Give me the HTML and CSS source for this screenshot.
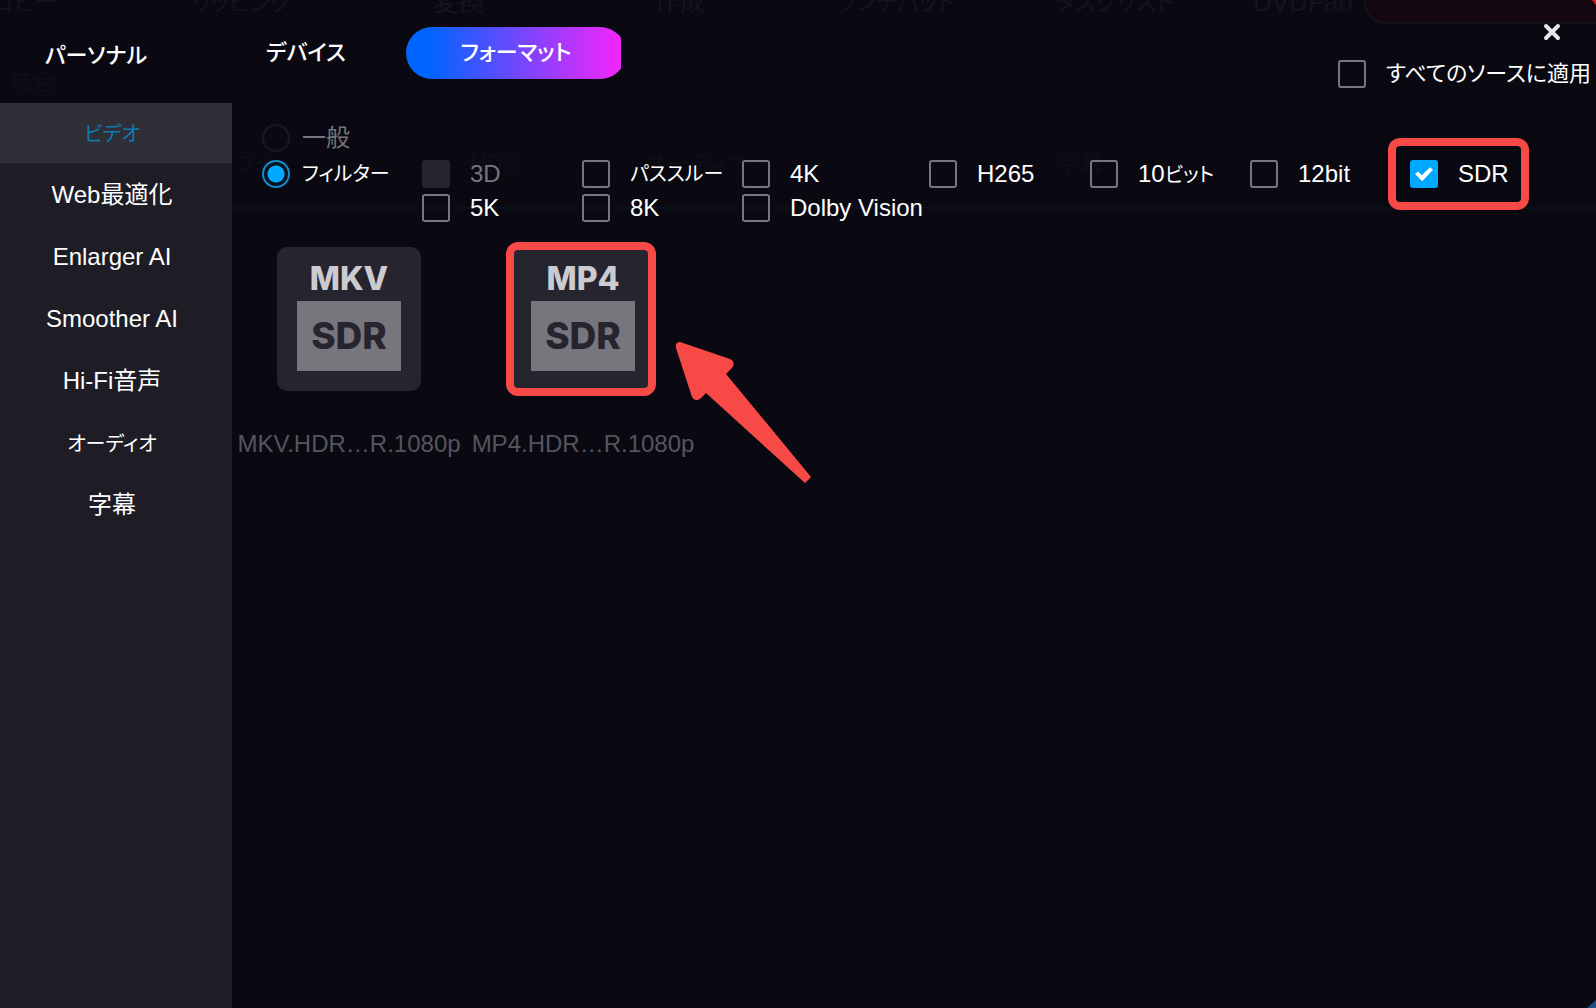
FILE: index.html
```html
<!DOCTYPE html>
<html lang="ja">
<head>
<meta charset="utf-8">
<meta name="viewport" content="width=device-width, initial-scale=1">
<title>フォーマット</title>
<link rel="stylesheet" href="styles.css">
</head>
<body>
<div class="app">
  <!-- Dimmed window behind the dialog -->
  <div class="backdrop" aria-hidden="true">
    <span class="ghost kana-ghost ghost-copy">コピー</span>
    <span class="ghost kana-ghost ghost-rip">リッピング</span>
    <span class="ghost ghost-convert">変換</span>
    <span class="ghost ghost-create">作成</span>
    <span class="ghost kana-ghost ghost-launch">ランチパッド</span>
    <span class="ghost kana-ghost ghost-tasks">タスクリスト</span>
    <span class="ghost ghost-fab">DVDFab</span>
    <span class="ghost-pill"></span>
    <span class="ghost small ghost-merge">結合</span>
    <span class="ghost small ghost-up">プク</span>
    <span class="ghost small ghost-hdr">HDR</span>
    <span class="ghost small ghost-audio">オーディオ</span>
    <span class="ghost small ghost-sub">字幕</span>
    <span class="ghost-line"></span>
    <span class="corner corner-top"></span>
    <span class="corner corner-bottom"></span>
  </div>

  <header class="header">
    <button class="tab tab-personal" type="button">パーソナル</button>
    <nav class="tabs">
      <button class="tab tab-device" type="button">デバイス</button>
      <button class="tab tab-format" type="button">フォーマット</button>
    </nav>
    <div class="actions">
      <button class="close" type="button" aria-label="閉じる">
        <svg width="18" height="18" viewBox="0 0 18 18"><path d="M3 3l12 12M15 3L3 15" stroke="#e6e6ea" stroke-width="4" stroke-linecap="round"/></svg>
      </button>
      <label class="option apply"><input class="check" type="checkbox">すべてのソースに適用</label>
    </div>
  </header>

  <nav class="sidebar">
    <a class="side-item active" href="#video"><span class="kana">ビデオ</span></a>
    <a class="side-item" href="#web">Web最適化</a>
    <a class="side-item" href="#enlarger">Enlarger AI</a>
    <a class="side-item" href="#smoother">Smoother AI</a>
    <a class="side-item" href="#hifi">Hi-Fi音声</a>
    <a class="side-item" href="#audio"><span class="kana">オーディオ</span></a>
    <a class="side-item" href="#subtitle">字幕</a>
  </nav>

  <main class="content">
    <div class="filters">
      <div class="modes">
        <label class="mode muted"><input class="radio" type="radio" name="mode" disabled>一般</label>
        <label class="mode"><input class="radio" type="radio" name="mode" checked><span class="kana">フィルター</span></label>
      </div>
      <div class="options">
        <label class="option muted"><input class="check" type="checkbox" disabled>3D</label>
        <label class="option"><input class="check" type="checkbox"><span class="kana">パススルー</span></label>
        <label class="option"><input class="check" type="checkbox">4K</label>
        <label class="option"><input class="check" type="checkbox">H265</label>
        <label class="option"><input class="check" type="checkbox"><span>10<span class="kana">ビット</span></span></label>
        <label class="option"><input class="check" type="checkbox">12bit</label>
        <label class="option marked"><input class="check" type="checkbox" checked>SDR</label>
        <label class="option"><input class="check" type="checkbox">5K</label>
        <label class="option"><input class="check" type="checkbox">8K</label>
        <label class="option"><input class="check" type="checkbox">Dolby Vision</label>
      </div>
    </div>

    <div class="formats">
      <figure class="format">
        <div class="tile"><span class="tile-name">MKV</span><span class="tile-range">SDR</span></div>
        <figcaption>MKV.HDR…R.1080p</figcaption>
      </figure>
      <figure class="format picked">
        <div class="tile"><span class="tile-name">MP4</span><span class="tile-range">SDR</span></div>
        <figcaption>MP4.HDR…R.1080p</figcaption>
        <svg class="arrow" width="140" height="146" viewBox="0 0 140 146" aria-hidden="true">
          <path d="M5 2 Q0 2 1 8 L17 57 Q20 63 26 58 L31 53 L130 143 L136 137 L51 34 L57 28 Q61 22 55 19 Z" fill="#f74a46"/>
        </svg>
      </figure>
    </div>
  </main>
</div>
</body>
</html>
```
FILE: styles.css
```css
*,
*::before,
*::after { box-sizing: border-box; }

body {
  margin: 0;
  background: #0a0912;
  color: #fff;
  font: 24px/28px "Liberation Sans", "Noto Sans CJK JP", sans-serif;
  font-feature-settings: "palt";
}

button {
  padding: 0;
  border: 0;
  background: none;
  color: inherit;
  font: inherit;
  font-feature-settings: inherit;
  cursor: pointer;
}

.kana {
  font-size: 20px;
  line-height: 24px;
}

.app {
  position: relative;
  display: grid;
  grid-template: 103px 1fr / 232px 1fr;
  min-height: 100vh;
  overflow: hidden;
  white-space: nowrap;
}

/* Header */
.header {
  position: relative;
  grid-column: 1 / -1;
  display: grid;
  grid-template-columns: 232px 1fr auto;
}
.tab {
  font-size: 22px;
  font-weight: 500;
}
.tab-personal { padding: 8px 40px 0 0; }
.tabs {
  display: flex;
  align-items: center;
  gap: 60px;
  padding: 3px 0 0 34px;
}
.tab-format {
  width: 220px;
  height: 52px;
  border-radius: 26px;
  background: linear-gradient(90deg, #0064ff 10%, #ec28fa 95%);
  clip-path: inset(0 5px 0 0);
}
.actions {
  display: flex;
  flex-direction: column;
  align-items: flex-end;
  gap: 19px;
  padding: 23px 5px 0 0;
}
.close {
  height: 18px;
  margin-right: 30px;
}
.close svg { display: block; }
.apply { font-size: 22px; }

/* Sidebar */
.sidebar {
  position: relative;
  display: flex;
  flex-direction: column;
  gap: 2px;
  background: #1e1d26;
}
.side-item {
  height: 60px;
  padding: 16px 8px 0 0;
  color: #fff;
  text-align: center;
  text-decoration: none;
}
.side-item.active {
  background: #302f37;
  color: #0c7db3;
}

/* Filters */
.content { position: relative; }
.filters {
  display: flex;
  align-items: flex-end;
  padding: 21px 0 0 30px;
}
.modes {
  display: flex;
  flex-direction: column;
  gap: 8px;
  width: 160px;
  padding-bottom: 34px;
}
.mode {
  display: flex;
  align-items: center;
  gap: 12px;
}
.options {
  display: grid;
  grid-template-columns: 160px 160px 187px 161px 160px 160px auto;
  row-gap: 6px;
}
.option {
  position: relative;
  display: flex;
  align-items: center;
  gap: 20px;
}
.muted { color: #77767c; }

.check,
.radio {
  flex: none;
  appearance: none;
  width: 28px;
  height: 28px;
  margin: 0;
  border: 2px solid #77767f;
  border-radius: 3px;
}
.check:disabled {
  border-color: #26252f;
  background: #26252f;
}
.check:checked {
  display: grid;
  place-items: center;
  border-color: #00a8ff;
  background: #00a8ff;
}
.check:checked::before {
  content: "";
  width: 18px;
  height: 16px;
  background: #fff;
  clip-path: polygon(0 50%, 17% 34%, 38% 58%, 83% 8%, 100% 24%, 40% 96%);
}
.radio {
  border-color: #191922;
  border-radius: 50%;
}
.radio:checked {
  border-color: #118bca;
  background: radial-gradient(circle, #00a8ff 8px, #04121f 9px);
}

.marked::after,
.picked::after {
  content: "";
  position: absolute;
  border: 8px solid #f74a46;
  border-radius: 12px;
}
.marked::after { inset: -22px -20px -22px -22px; }

/* Formats */
.formats {
  display: flex;
  padding-top: 25px;
}
.format {
  position: relative;
  display: flex;
  flex-direction: column;
  align-items: center;
  gap: 39px;
  width: 234px;
  margin: 0;
  color: #56555d;
}
.tile {
  display: flex;
  flex-direction: column;
  align-items: center;
  width: 144px;
  height: 144px;
  padding-top: 14px;
  border-radius: 10px;
  background: #26252f;
  font-family: Inter, sans-serif;
  font-weight: 800;
}
.tile-name {
  height: 40px;
  color: #cccbd0;
  font-size: 32px;
  line-height: 36px;
}
.tile-range {
  width: 104px;
  background: #77767d;
  color: #26252f;
  font-size: 37px;
  line-height: 70px;
  text-align: center;
}
.picked::after {
  top: -5px;
  left: 40px;
  width: 150px;
  height: 154px;
}
.arrow {
  position: absolute;
  top: 93px;
  left: 209px;
}

/* Backdrop */
.backdrop {
  position: absolute;
  inset: 0;
}
.backdrop span { position: absolute; }
.ghost {
  top: -12px;
  color: #14141e;
  font-size: 26px;
}
.kana-ghost { font-size: 23px; }
.small {
  top: 150px;
  color: #0e0e17;
  font-size: 23px;
}
.ghost-copy { left: -8px; }
.ghost-rip { left: 192px; }
.ghost-convert { left: 432px; }
.ghost-create { left: 654px; }
.ghost-launch { left: 836px; }
.ghost-tasks { left: 1055px; }
.ghost-fab { left: 1253px; }
.ghost-merge { top: 68px; left: 10px; }
.ghost-up { left: 234px; }
.ghost-hdr { left: 470px; }
.ghost-audio { left: 646px; }
.ghost-sub { left: 1057px; }
.ghost-pill {
  top: -20px;
  right: -20px;
  width: 252px;
  height: 44px;
  border: 2px solid #14121c;
  border-radius: 22px;
  background: #150711;
}
.ghost-line {
  top: 207px;
  left: 232px;
  right: 0;
  height: 2px;
  background: #0b111b;
}
.corner { right: 0; }
.corner-top {
  top: 0;
  width: 4px;
  height: 5px;
  background: #f01414;
  clip-path: polygon(0 0, 100% 0, 100% 100%);
}
.corner-bottom {
  bottom: 0;
  width: 9px;
  height: 8px;
  background: #1b4f86;
  clip-path: polygon(100% 0, 100% 100%, 0 100%);
}
```
